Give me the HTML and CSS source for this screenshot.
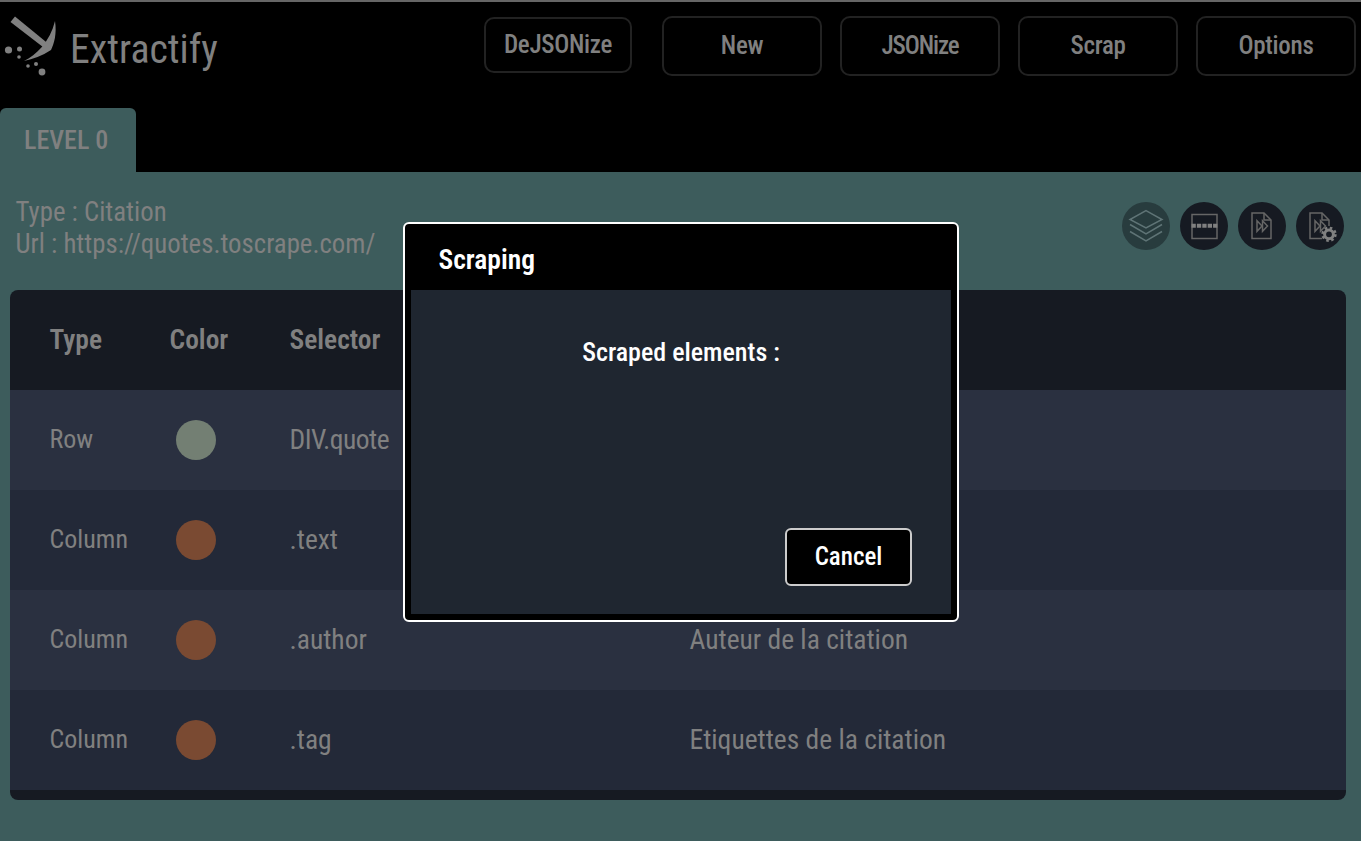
FILE: index.html
```html
<!DOCTYPE html>
<html lang="en">
<head>
<meta charset="utf-8">
<title>Extractify</title>
<link rel="stylesheet" href="styles.css">
</head>
<body>
<header class="topbar">
  <div class="brand">
    <svg class="logo" width="60" height="80" viewBox="0 0 60 80">
      <path class="logo-fill" d="M15 16.500 L51 46 L47.500 50.500 L10.500 22 Z"/>
      <path class="logo-fill" d="M55 21 C57 34 54 44 51 50 C42 56 33 59 24 61 C36 55 50 42 55 21 Z"/>
      <circle class="logo-fill" cx="8.500" cy="50" r="3.6"/>
      <circle class="logo-fill" cx="19.500" cy="49" r="2.5"/>
      <circle class="logo-fill" cx="19" cy="57" r="1.8"/>
      <circle class="logo-fill" cx="28" cy="66" r="1.8"/>
      <circle class="logo-fill" cx="36" cy="64" r="2"/>
      <circle class="logo-fill" cx="42" cy="72" r="3.4"/>
    </svg>
    <span class="brand-name">Extractify</span>
  </div>
  <nav class="actions">
    <button class="btn btn-small">DeJSONize</button>
    <button class="btn">New</button>
    <button class="btn btn-tight">JSONize</button>
    <button class="btn">Scrap</button>
    <button class="btn">Options</button>
  </nav>
</header>
<div class="tabs"><div class="tab">LEVEL 0</div></div>
<main class="content">
  <section class="info">
    <div class="info-text">
      <div>Type : Citation</div>
      <div>Url : https://quotes.toscrape.com/</div>
    </div>
    <div class="tools">
      <span class="tool tool-active">
        <svg width="48" height="48" viewBox="0 0 48 48" fill="none" class="ic"><path d="M24 8.700 L40 17.500 L24 26 L8 17.500 Z"/><path d="M8 22.500 L24 32 L40 22.500"/><path d="M8 29.500 L24 39 L40 29.500"/></svg>
      </span>
      <span class="tool">
        <svg width="48" height="48" viewBox="0 0 48 48" fill="none" class="ic"><rect x="12" y="12.500" width="25" height="24"/><path class="dash" d="M11.500 23.700 H37.500"/></svg>
      </span>
      <span class="tool">
        <svg width="48" height="48" viewBox="0 0 48 48" fill="none" class="ic"><path d="M14 11 H26 L33 18 V36.500 H14 Z"/><path d="M26 11 V18 H33"/><path d="M19 18.700 L24 24 L19 29.300 Z"/><path d="M24.500 18.700 L29.500 24 L24.500 29.300 Z"/></svg>
      </span>
      <span class="tool">
        <svg width="48" height="48" viewBox="0 0 48 48" fill="none" class="ic"><path d="M33 24 V18 L26 11 H14 V36.500 H26"/><path d="M26 11 V18 H33"/><path d="M19 18.700 L24 24 L19 29.300 Z"/><path d="M24.500 18.700 L29.500 24 L24.500 29.300 Z"/><circle class="gear" cx="33" cy="32.300" r="4.400"/><circle class="gear-teeth" cx="33" cy="32.300" r="6.400"/></svg>
      </span>
    </div>
  </section>
  <section class="table">
    <div class="row row-head"><div class="c-type">Type</div><div class="c-color">Color</div><div class="c-sel">Selector</div><div class="c-desc"></div></div>
    <div class="row row-a"><div class="c-type">Row</div><div class="c-color"><i class="dot dot-row"></i></div><div class="c-sel sel-caps">DIV.quote</div><div class="c-desc"></div></div>
    <div class="row row-b"><div class="c-type">Column</div><div class="c-color"><i class="dot dot-col"></i></div><div class="c-sel">.text</div><div class="c-desc"></div></div>
    <div class="row row-a"><div class="c-type">Column</div><div class="c-color"><i class="dot dot-col"></i></div><div class="c-sel">.author</div><div class="c-desc">Auteur de la citation</div></div>
    <div class="row row-b"><div class="c-type">Column</div><div class="c-color"><i class="dot dot-col"></i></div><div class="c-sel">.tag</div><div class="c-desc">Etiquettes de la citation</div></div>
  </section>
</main>
<div class="modal">
  <h2 class="modal-title">Scraping</h2>
  <div class="modal-body">
    <p class="modal-text">Scraped elements :</p>
    <div class="modal-foot"><button class="cancel">Cancel</button></div>
  </div>
</div>
</body>
</html>
```
FILE: styles.css
```css
* { box-sizing: border-box; }
html, body { margin: 0; height: 100%; }
body {
  height: 841px;
  overflow: hidden;
  background: #3d5c5c;
  color: #808080;
  font-family: "Roboto", "Liberation Sans", sans-serif;
  font-stretch: 75%;
  font-size: 27.5px;
  position: relative;
}
.topbar {
  height: 108px;
  background: #000;
  border-top: 2px solid #666;
  display: flex;
  justify-content: space-between;
  padding-right: 5px;
}
.brand { display: flex; align-items: flex-start; }
.logo { display: block; margin-top: -2px; width: 60px; height: 80px; margin-right: 10px; }
.logo-fill { fill: #808080; }
.brand-name { font-size: 39.8px; line-height: 44px; margin-top: 26px; }
.actions { display: flex; gap: 18px; align-items: flex-start; padding-top: 14px; }
.btn {
  width: 160px;
  height: 60px;
  padding: 0 0 2px;
  background: #000;
  border: 2px solid #222;
  border-radius: 10px;
  color: #808080;
  font: inherit;
  font-size: 25px;
  font-weight: 500;
  letter-spacing: -0.3px;
}
.btn-small { width: 148px; height: 56px; margin: 1px 12px 0 0; }
.btn-tight { letter-spacing: -1.1px; }
.tabs { height: 64px; background: #000; }
.tab {
  width: 136px;
  height: 64px;
  background: #3d5c5c;
  border-radius: 6px 6px 0 0;
  padding-left: 24px;
  line-height: 64px;
  font-size: 26px;
  font-weight: 500;
}
.content { padding: 0 15px 0 10px; }
.info { height: 118px; display: flex; justify-content: space-between; padding: 24px 2px 0 5.5px; }
.info-text { line-height: 32px; font-size: 26.8px; }
.tools { display: flex; gap: 10px; padding-top: 6px; }
.tool { width: 48px; height: 48px; border-radius: 50%; background: #161a22; display: block; }
.tool-active { background: #283c3e; }
.ic { display: block; stroke: #666; stroke-width: 1.5; }
.tool-active .ic { stroke: #5f7476; }
.dash { stroke-width: 4; stroke-dasharray: 4.300 1.100; stroke: #808080; }
.gear { fill: none; stroke: #808080; stroke-width: 3; }
.gear-teeth { fill: none; stroke: #808080; stroke-width: 2.6; stroke-dasharray: 2.500 2.530; }
.table {
  height: 510px;
  background: #161a22;
  border-radius: 8px;
  overflow: hidden;
}
.row { height: 100px; display: flex; align-items: center; padding-left: 40px; }
.row-head { font-weight: 600; }
.row-a { background: #2a3040; }
.row-b { background: #232938; }
.c-type { width: 120px; margin: -2px 0 0 -0.5px; }
.c-color { width: 120px; margin-top: -2px; }
.c-sel { width: 400px; margin: -2px 0 0; }
.c-desc { margin-top: -2px; }
.row:not(.row-head) .c-type { font-size: 26px; }
.row:not(.row-head) .c-color { margin-top: 0; }
.sel-caps { letter-spacing: -0.5px; }
.dot { display: block; width: 40px; height: 40px; border-radius: 50%; margin-left: 6px; }
.dot-row { background: #737f73; }
.dot-col { background: #7a4a32; }
.modal {
  position: absolute;
  left: 403px;
  top: 222px;
  width: 556px;
  height: 400px;
  background: #000;
  border: 2px solid #fff;
  border-radius: 6px;
  padding: 0 6px 6px;
  display: flex;
  flex-direction: column;
}
.modal-title { margin: 0; height: 66px; line-height: 72px; padding-left: 27.5px; color: #fff; font-size: 27.5px; font-weight: 600; }
.modal-body { flex: 1; background: #1f2630; display: flex; flex-direction: column; color: #fff; }
.modal-text { margin: 0; text-align: center; line-height: 32px; padding-top: 46px; font-size: 26px; font-weight: 500; }
.modal-foot { margin-top: auto; display: flex; justify-content: flex-end; padding: 0 39px 28px 0; }
.cancel {
  width: 127px;
  height: 58px;
  padding: 0 0 2px;
  background: #000;
  color: #fff;
  border: 2px solid #ccc;
  border-radius: 6px;
  font: inherit;
  font-size: 25px;
  font-weight: 500;
}
```
